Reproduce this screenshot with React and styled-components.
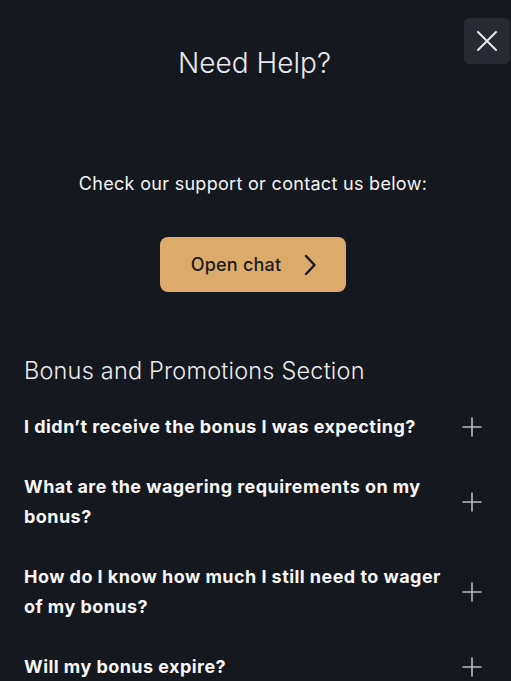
import React from "react";
import styled, { createGlobalStyle } from "styled-components";

const questions = [
  "I didn’t receive the bonus I was expecting?",
  "What are the wagering requirements on my bonus?",
  "How do I know how much I still need to wager of my bonus?",
  "Will my bonus expire?",
];

const GlobalStyle = createGlobalStyle`
  html, body {
    margin: 0;
    padding: 0;
    background: #15181e;
    overflow: hidden;
  }
  * { box-sizing: border-box; }
`;

function CloseIcon() {
  return (
    <svg width="22" height="22" viewBox="0 0 22 22" fill="none">
      <path d="M2 2L20 20M20 2L2 20" stroke="#e8e8ea" strokeWidth="2" strokeLinecap="round" />
    </svg>
  );
}

function Chevron() {
  return (
    <svg width="14" height="22" viewBox="0 0 14 22" fill="none">
      <path d="M3 2L11.5 11L3 20" stroke="#15181e" strokeWidth="2.4" strokeLinecap="round" strokeLinejoin="round" />
    </svg>
  );
}

function PlusIcon() {
  return (
    <svg width="20" height="20" viewBox="0 0 20 20" fill="none">
      <path d="M10 1V19M1 10H19" stroke="#b9bbc0" strokeWidth="1.6" strokeLinecap="round" />
    </svg>
  );
}

function App() {
  return (
    <Page>
      <GlobalStyle />
      <CloseButton aria-label="Close">
        <CloseIcon />
      </CloseButton>
      <Title>Need Help?</Title>
      <Lead>Check our support or contact us below:</Lead>
      <ChatButton>
        Open chat
        <Chevron />
      </ChatButton>
      <SectionTitle>Bonus and Promotions Section</SectionTitle>
      <List>
        {questions.map((q, i) => (
          <Question key={i}>
            <QuestionText>{q}</QuestionText>
            <PlusIcon />
          </Question>
        ))}
      </List>
    </Page>
  );
}

const Page = styled.div`
  position: relative;
  width: 511px;
  height: 681px;
  background: #15181e;
  color: #f2f2f2;
  font-family: Inter, "Noto Sans", sans-serif;
  display: flex;
  flex-direction: column;
  padding: 43px 29px 0 24px;
`;

const CloseButton = styled.button`
  position: absolute;
  top: 18px;
  right: 1px;
  width: 46px;
  height: 46px;
  border: none;
  border-radius: 5px;
  background: #272a33;
  display: flex;
  align-items: center;
  justify-content: center;
  padding: 0;
  cursor: pointer;
`;

const Title = styled.h1`
  margin: 0;
  text-align: center;
  font-size: 28px;
  font-weight: 300;
  line-height: 40px;
  color: #e9e9ec;
  padding-left: 3px;
`;

const Lead = styled.p`
  margin: 88px 0 0;
  text-align: center;
  font-size: 18px;
  font-weight: 400;
  letter-spacing: 0.3px;
  line-height: 26px;
  color: #f4f4f4;
`;

const ChatButton = styled.button`
  align-self: center;
  flex-shrink: 0;
  margin: 40px 0 0;
  width: 186px;
  height: 55px;
  border: none;
  border-radius: 8px;
  background: #dcab6b;
  color: #1a1b1f;
  font-family: inherit;
  font-size: 18px;
  font-weight: 500;
  letter-spacing: 0.2px;
  display: flex;
  align-items: center;
  justify-content: center;
  gap: 22px;
  padding: 0 0 0 2px;
`;

const SectionTitle = styled.h2`
  margin: 63px 0 0;
  font-size: 23.5px;
  font-weight: 300;
  letter-spacing: 0.2px;
  line-height: 32px;
  color: #ececee;
`;

const List = styled.div`
  display: flex;
  flex-direction: column;
  margin-top: 25px;
  gap: 30px;
`;

const Question = styled.div`
  display: flex;
  align-items: center;
  justify-content: space-between;
  gap: 10px;

  svg {
    flex-shrink: 0;
  }
`;

const QuestionText = styled.div`
  max-width: 432px;
  font-size: 18px;
  font-weight: 700;
  letter-spacing: 0.45px;
  line-height: 30px;
  color: #f6f6f6;
`;

export default App;
